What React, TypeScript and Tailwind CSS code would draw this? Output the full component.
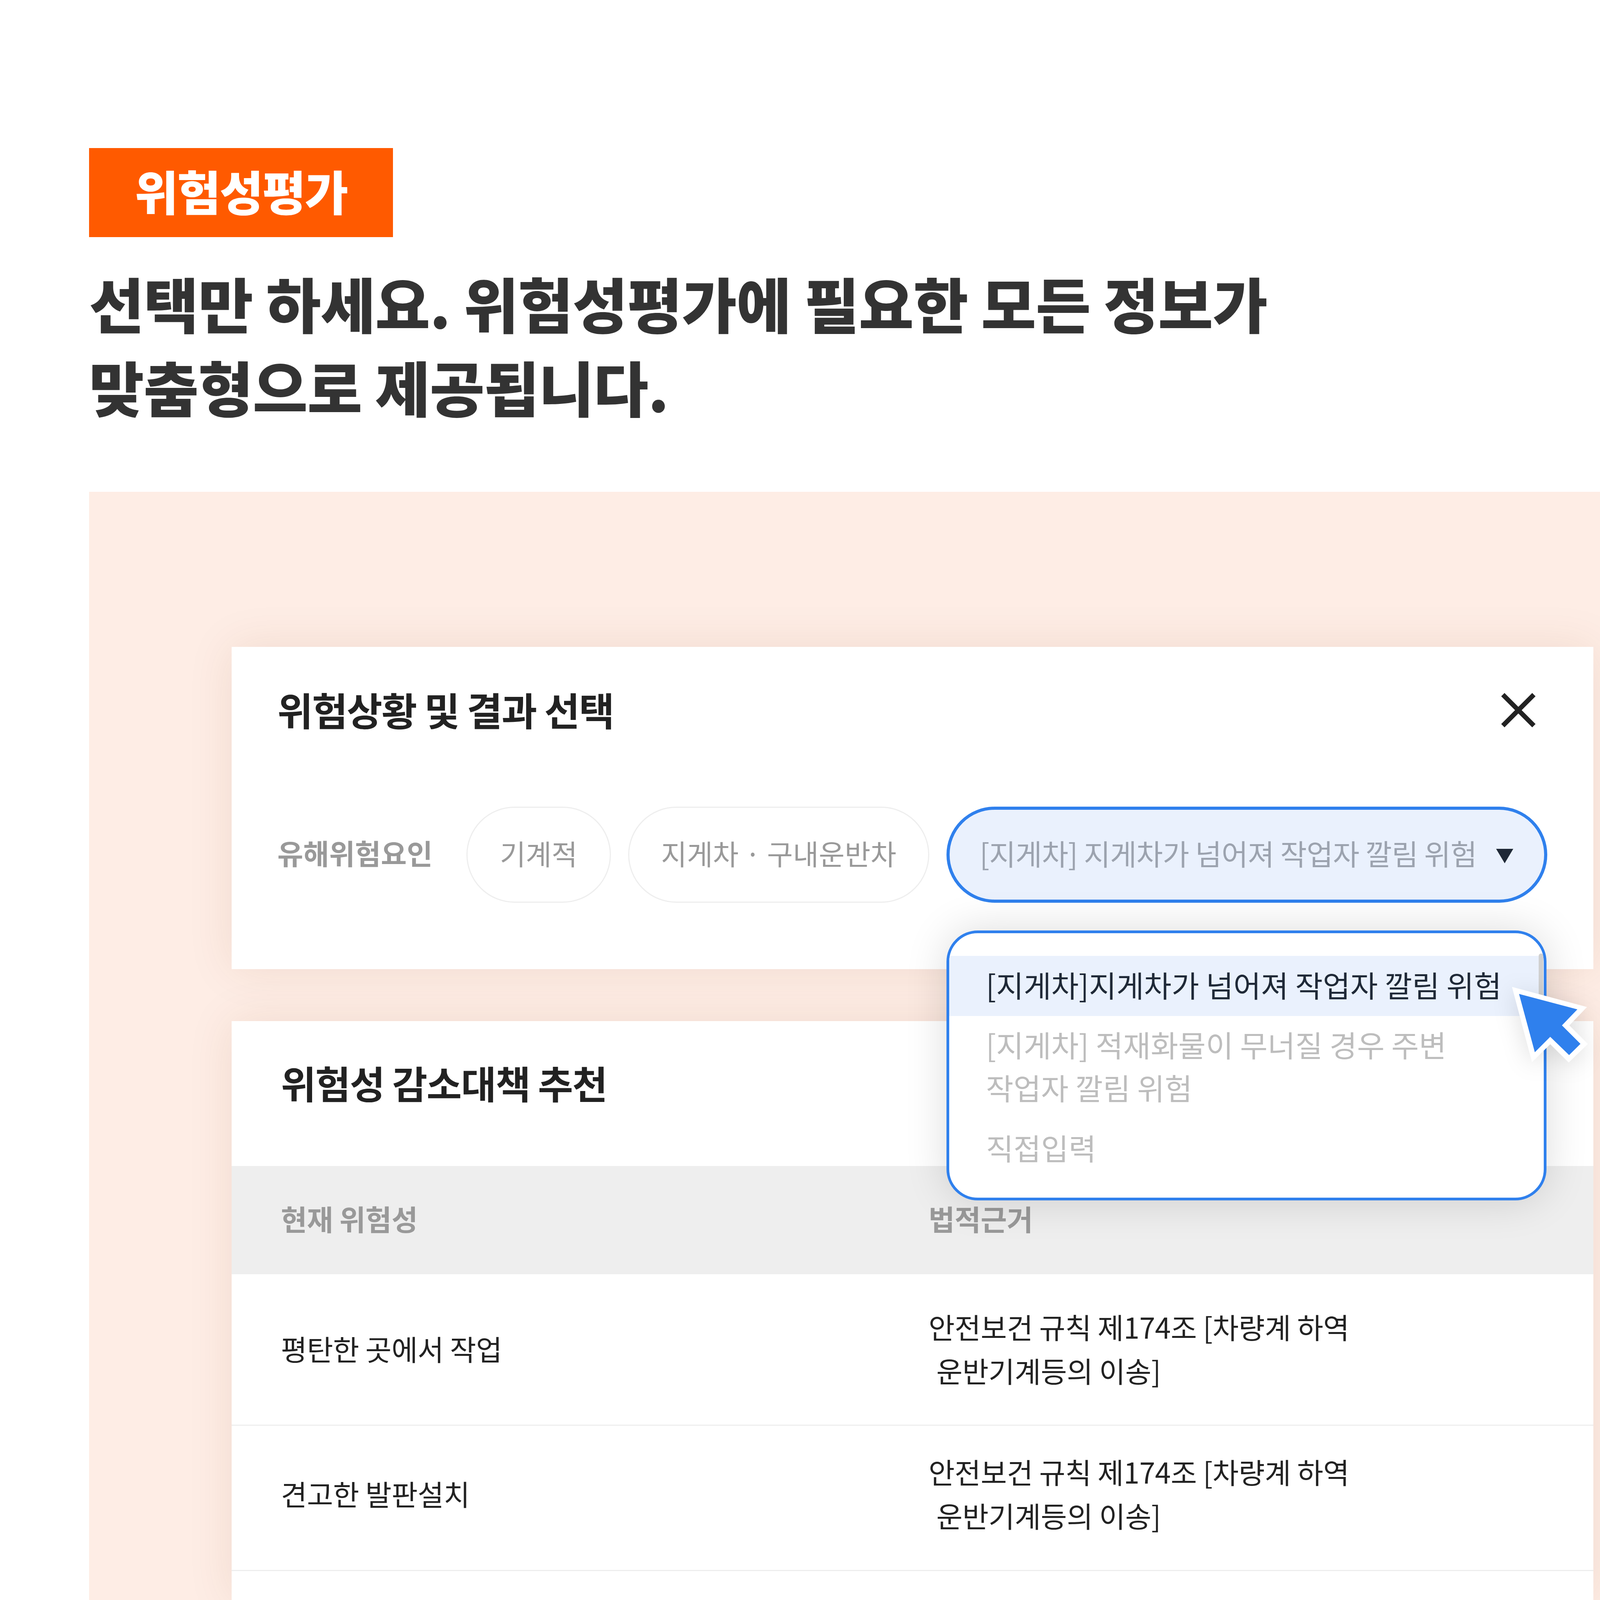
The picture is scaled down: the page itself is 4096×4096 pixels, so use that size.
const sans = "font-['Noto_Sans_CJK_KR','Noto_Sans',sans-serif]";

const rows = [
  { id: 1, name: "평탄한 곳에서 작업", size: "h-[388px] pb-[8px]" },
  { id: 2, name: "견고한 발판설치", size: "h-[372px] pb-[25px]" },
];

function CloseIcon() {
  return (
    <svg width="88" height="88" viewBox="0 0 88 88" fill="none">
      <path d="M4.3 4.3L83.7 83.7M83.7 4.3L4.3 83.7" stroke="#222222" strokeWidth="12" />
    </svg>
  );
}

function Cursor() {
  return (
    <svg
      className="absolute left-[3697px] top-[2427px] drop-shadow-[0_10px_30px_rgba(0,0,0,0.12)]"
      width="398"
      height="322"
      viewBox="0 0 1260 1020"
    >
      <polygon
        points="550,315 1158,478 1015,627 1165,778 1010,928 860,780 712,925"
        fill="#ffffff"
      />
      <polygon
        points="607,372 1080,497 955,627 1105,777 1013,868 860,720 735,845"
        fill="#2f80ed"
      />
    </svg>
  );
}

function Dropdown() {
  return (
    <div className="absolute left-[2423px] top-[2382px] h-[691px] w-[1536px] overflow-hidden rounded-[80px] border-[7px] border-[#2f80ed] bg-white pt-[58px] text-[76.7px] shadow-[0_0_110px_rgba(0,0,0,0.14)]">
      <div className="absolute right-[1px] top-[52px] h-[120px] w-[12px] rounded-full bg-[#d0d0d0]" />
      <div className="mr-[13px] flex h-[154px] items-center bg-[#eaf1fd] pb-[8px] pl-[94px] text-[#1f2937]">
        [지게차]지게차가 넘어져 작업자 깔림 위험
      </div>
      <div className="mt-[17px] pl-[94px] leading-[110px] text-[#bdbdbd]">
        [지게차] 적재화물이 무너질 경우 주변
        <br />
        작업자 깔림 위험
      </div>
      <div className="mt-[44px] pl-[94px] leading-[110px] text-[#bdbdbd]">직접입력</div>
    </div>
  );
}

export default function App() {
  return (
    <div className={`relative flex h-[4096px] w-[4096px] flex-col overflow-hidden bg-white pt-[379px] ${sans}`}>
      <div className="ml-[228px] flex h-[228px] w-[778px] items-center justify-center bg-[#ff5a00] pb-[12px] text-[121px] font-black tracking-[-0.02em] text-white">
        위험성평가
      </div>
      <h1 className="ml-[228px] mt-[61px] text-[153px] font-black leading-[214px] tracking-[-0.007em] text-[#333333]">
        선택만 하세요. 위험성평가에 필요한 모든 정보가
        <br />
        맞춤형으로 제공됩니다.
      </h1>
      <div className="ml-[228px] mt-[163px] flex flex-1 flex-col bg-[#feede5] pl-[365px] pr-[17px] pt-[397px]">
        <section className="h-[825px] bg-white pl-[117px] pr-[116px] pt-[102px] shadow-[0_0_110px_rgba(120,60,20,0.1)]">
          <div className="flex h-[120px] items-center justify-between pr-[32px]">
            <h2 className="-mt-[5px] text-[99px] font-bold tracking-[-0.022em] text-[#222222]">위험상황 및 결과 선택</h2>
            <CloseIcon />
          </div>
          <div className="mt-[187px] flex items-center text-[72px]">
            <span className="-mt-[12px] w-[484px] font-semibold text-[#999999]">유해위험요인</span>
            <span className="flex h-[246px] w-[370px] items-center justify-center rounded-full border-[3px] border-[#eeeeee] pb-[11px] text-[#999999]">
              기계적
            </span>
            <span className="ml-[44px] flex h-[246px] w-[771px] items-center justify-center rounded-full border-[3px] border-[#eeeeee] pb-[11px] text-[#999999]">
              지게차 · 구내운반차
            </span>
            <span className="ml-[44px] flex h-[246px] w-[1538px] items-center justify-between rounded-full border-[8px] border-[#2f80ed] bg-[#eaf1fd] pl-[77px] pr-[79px] text-[74px] tracking-[-0.01em] text-[#9ca3af]">
              <span className="-mt-[11px]">[지게차] 지게차가 넘어져 작업자 깔림 위험</span>
              <svg className="mt-[6px]" width="44" height="37" viewBox="0 0 44 37">
                <polygon points="0,0 44,0 22,37" fill="#1f2937" />
              </svg>
            </span>
          </div>
        </section>
        <section className="mt-[133px] flex-1 bg-white shadow-[0_0_110px_rgba(120,60,20,0.1)]">
          <div className="flex h-[371px] items-center pb-[58px] pl-[126px] text-[98px] font-bold tracking-[-0.02em] text-[#222222]">
            위험성 감소대책 추천
          </div>
          <div className="grid h-[277px] grid-cols-[1784px_1fr] items-center bg-[#eeeeee] pb-[10px] pl-[126px] text-[73px] font-semibold tracking-[-0.005em] text-[#999999]">
            <span>현재 위험성</span>
            <span className="-ml-[126px]">법적근거</span>
          </div>
          {rows.map((row) => (
            <div
              key={row.id}
              className={`grid ${row.size} grid-cols-[1784px_1fr] items-center border-b-[3px] border-[#eeeeee] pl-[126px] text-[73px] leading-[112px] tracking-[-0.005em] text-[#222222]`}
            >
              <span>{row.name}</span>
              <span className="-ml-[126px]">
                안전보건 규칙 제174조 [차량계 하역
                <br />
                <span className="pl-[20px]">운반기계등의 이송]</span>
              </span>
            </div>
          ))}
        </section>
      </div>
      <Dropdown />
      <Cursor />
    </div>
  );
}
